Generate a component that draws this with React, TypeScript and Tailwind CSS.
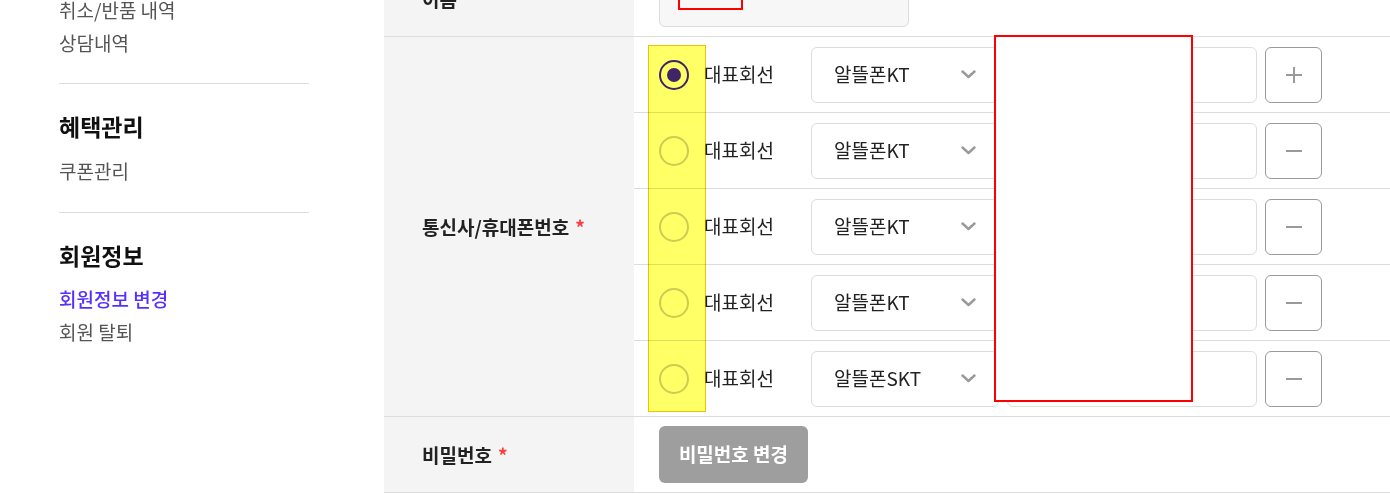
const phones = [
  { carrier: "알뜰폰KT", main: true },
  { carrier: "알뜰폰KT", main: false },
  { carrier: "알뜰폰KT", main: false },
  { carrier: "알뜰폰KT", main: false },
  { carrier: "알뜰폰SKT", main: false },
]

const font = { fontFamily: '"Noto Sans CJK KR", "Noto Sans", sans-serif' }

function Chevron() {
  return (
    <svg width="15" height="9" viewBox="0 0 15 9" fill="none">
      <polyline points="1.5,1.5 7.5,7 13.5,1.5" stroke="#9a9a9a" strokeWidth="2.4" strokeLinecap="round" strokeLinejoin="round" />
    </svg>
  )
}

function Sidebar() {
  return (
    <aside className="w-[384px] shrink-0 pl-[59px] -mt-[7px]">
      <div className="w-[250px]">
        <div className="text-[19px] leading-[33px] text-[#555]">
          <div>취소/반품 내역</div>
          <div>상담내역</div>
        </div>
        <div className="mt-[24px] border-t border-[#dddddd]" />
        <h3 className="mt-[27px] text-[23px] leading-[30px] font-bold text-[#111]">혜택관리</h3>
        <div className="mt-[13px] text-[19px] leading-[33px] text-[#555]">
          <div>쿠폰관리</div>
        </div>
        <div className="mt-[25px] border-t border-[#dddddd]" />
        <h3 className="mt-[27px] text-[23px] leading-[30px] font-bold text-[#111]">회원정보</h3>
        <div className="mt-[12px] text-[19px] leading-[33px] text-[#555]">
          <div className="font-medium text-[#5530ff]">회원정보 변경</div>
          <div>회원 탈퇴</div>
        </div>
      </div>
    </aside>
  )
}

function Label({ children }: { children: React.ReactNode }) {
  return (
    <div className="w-[250px] shrink-0 bg-[#f4f4f4] pl-[38px] pt-[2px] flex items-center text-[19px] font-bold text-[#222]">
      {children}
      <span className="ml-[6px] text-[#ff3b3b]">*</span>
    </div>
  )
}

export default function App() {
  return (
    <div className="relative h-[494px] w-[1390px] overflow-hidden bg-white" style={font}>
      <div className="flex">
        <Sidebar />
        <main className="flex-1 -mt-[39px]">
          <div className="flex h-[76px] border-b border-[#dddddd]">
            <Label>이름</Label>
            <div className="flex-1 flex items-center pl-[25px]">
              <div className="h-[56px] w-[250px] rounded-[6px] border border-[#dddddd] bg-[#f7f7f7]" />
            </div>
          </div>

          <div className="flex border-b border-[#dddddd]">
            <Label>통신사/휴대폰번호</Label>
            <div className="flex-1">
              {phones.map((p, i) => (
                <div
                  key={i}
                  className={`flex items-center pl-[25px] ${i < phones.length - 1 ? "h-[76px] border-b border-[#dddddd]" : "h-[75px]"}`}
                >
                  <div className="w-[152px] flex items-center">
                    {p.main ? (
                      <div className="relative z-10 w-[30px] h-[30px] rounded-full border-2 border-[#3e2468] flex items-center justify-center">
                        <div className="w-[14px] h-[14px] rounded-full bg-[#3e2468]" />
                      </div>
                    ) : (
                      <div className="w-[30px] h-[30px] rounded-full border-2 border-[#cccccc]" />
                    )}
                    <span className="ml-[15px] text-[19px] text-[#222]">대표회선</span>
                  </div>
                  <div className="h-[56px] w-[188px] rounded-[6px] border border-[#dddddd] flex items-center justify-between pl-[22px] pr-[22px] text-[19px] text-[#222]">
                    <span>{p.carrier}</span>
                    <Chevron />
                  </div>
                  <div className="ml-[8px] h-[56px] w-[250px] rounded-[6px] border border-[#dddddd]" />
                  <button className="ml-[8px] h-[56px] w-[57px] rounded-[6px] border border-[#9a9a9a] flex items-center justify-center">
                    <svg width="18" height="18" viewBox="0 0 18 18">
                      <line x1="1" y1="9" x2="17" y2="9" stroke="#9a9a9a" strokeWidth="2" />
                      {i === 0 && <line x1="9" y1="1" x2="9" y2="17" stroke="#9a9a9a" strokeWidth="2" />}
                    </svg>
                  </button>
                </div>
              ))}
            </div>
          </div>

          <div className="flex h-[76px] border-b border-[#dddddd]">
            <Label>비밀번호</Label>
            <div className="flex-1 flex items-center pl-[25px]">
              <button className="h-[57px] w-[149px] rounded-[6px] bg-[#9e9e9e] text-[19px] font-bold text-white">
                비밀번호 변경
              </button>
            </div>
          </div>
        </main>
      </div>

      {/* annotation overlays */}
      <div className="absolute left-[678px] -top-[10px] w-[65px] h-[20px] border-2 border-[#ff0000]" />
      <div className="absolute left-[648px] top-[45px] w-[58px] h-[367px] border border-[#f2c200] bg-[#ffff66] mix-blend-multiply" />
      <div className="absolute left-[994px] top-[35px] w-[199px] h-[367px] border-2 border-[#ff0000] bg-white" />
    </div>
  )
}
